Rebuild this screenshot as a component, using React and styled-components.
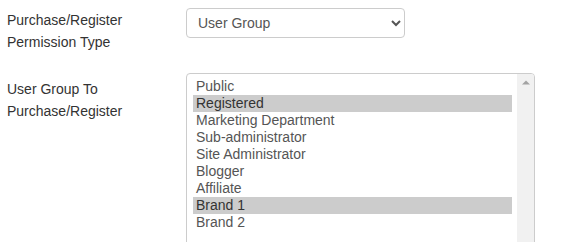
import React, { useState } from 'react';
import styled, { createGlobalStyle } from 'styled-components';

const GlobalStyle = createGlobalStyle`
  body {
    margin: 0;
    background: #fff;
    font-family: "Liberation Sans", Arial, sans-serif;
    font-size: 14px;
    color: #333;
  }
`;

const Form = styled.div`
  padding: 8px 7px;
  display: flex;
  flex-direction: column;
  gap: 20px;
`;

const Row = styled.div`
  display: grid;
  grid-template-columns: 179px 1fr;
  align-items: start;
`;

const Label = styled.label`
  line-height: 22px;
  padding-top: ${(p) => p.$offset || 0}px;
  color: #333;
`;

const Dropdown = styled.select`
  width: 219px;
  height: 30px;
  padding: 0 6px 0 7px;
  border: 1px solid #ccc;
  border-radius: 4px;
  background: #fff;
  font-family: "Liberation Sans", Arial, sans-serif;
  font-size: 14px;
  color: #555;
  outline: none;
`;

const ListFrame = styled.div`
  width: 349px;
  height: 200px;
  box-sizing: border-box;
  border: 1px solid #ccc;
  border-radius: 4px;
  overflow: hidden;
  display: flex;
  background: #fff;
`;

const Options = styled.div`
  flex: 1;
  padding: 4px 5px 4px 6px;
  display: flex;
  flex-direction: column;
`;

const Option = styled.div`
  height: 17px;
  line-height: 16px;
  padding: 0 3px;
  color: ${(p) => (p.$selected ? '#333' : '#555')};
  background: ${(p) => (p.$selected ? '#cccccc' : 'transparent')};
  cursor: default;
  white-space: nowrap;
`;

const ScrollTrack = styled.div`
  width: 17px;
  background: #f1f1f1;
  display: flex;
  flex-direction: column;
  align-items: center;
`;

const ScrollButton = styled.div`
  height: 17px;
  width: 17px;
  display: flex;
  align-items: center;
  justify-content: center;
`;

const groups = [
  'Public',
  'Registered',
  'Marketing Department',
  'Sub-administrator',
  'Site Administrator',
  'Blogger',
  'Affiliate',
  'Brand 1',
  'Brand 2',
];

const App = () => {
  const [selected, setSelected] = useState(['Registered', 'Brand 1']);

  const toggle = (g) => {
    setSelected((s) => (s.includes(g) ? s.filter((x) => x !== g) : [...s, g]));
  };

  return (
    <>
      <GlobalStyle />
      <Form>
        <Row>
          <Label $offset={1}>
            Purchase/Register
            <br />
            Permission Type
          </Label>
          <Dropdown defaultValue="usergroup">
            <option value="everyone">Everyone</option>
            <option value="usergroup">User Group</option>
          </Dropdown>
        </Row>
        <Row>
          <Label $offset={5}>
            User Group To
            <br />
            Purchase/Register
          </Label>
          <ListFrame role="listbox" aria-multiselectable="true">
            <Options>
              {groups.map((g) => (
                <Option
                  key={g}
                  role="option"
                  aria-selected={selected.includes(g)}
                  $selected={selected.includes(g)}
                  onClick={() => toggle(g)}
                >
                  {g}
                </Option>
              ))}
            </Options>
            <ScrollTrack>
              <ScrollButton>
                <svg width="8" height="5" viewBox="0 0 8 5">
                  <path d="M0 4.5 L4 0.5 L8 4.5 Z" fill="#a3a3a3" />
                </svg>
              </ScrollButton>
            </ScrollTrack>
          </ListFrame>
        </Row>
      </Form>
    </>
  );
};

export default App;
